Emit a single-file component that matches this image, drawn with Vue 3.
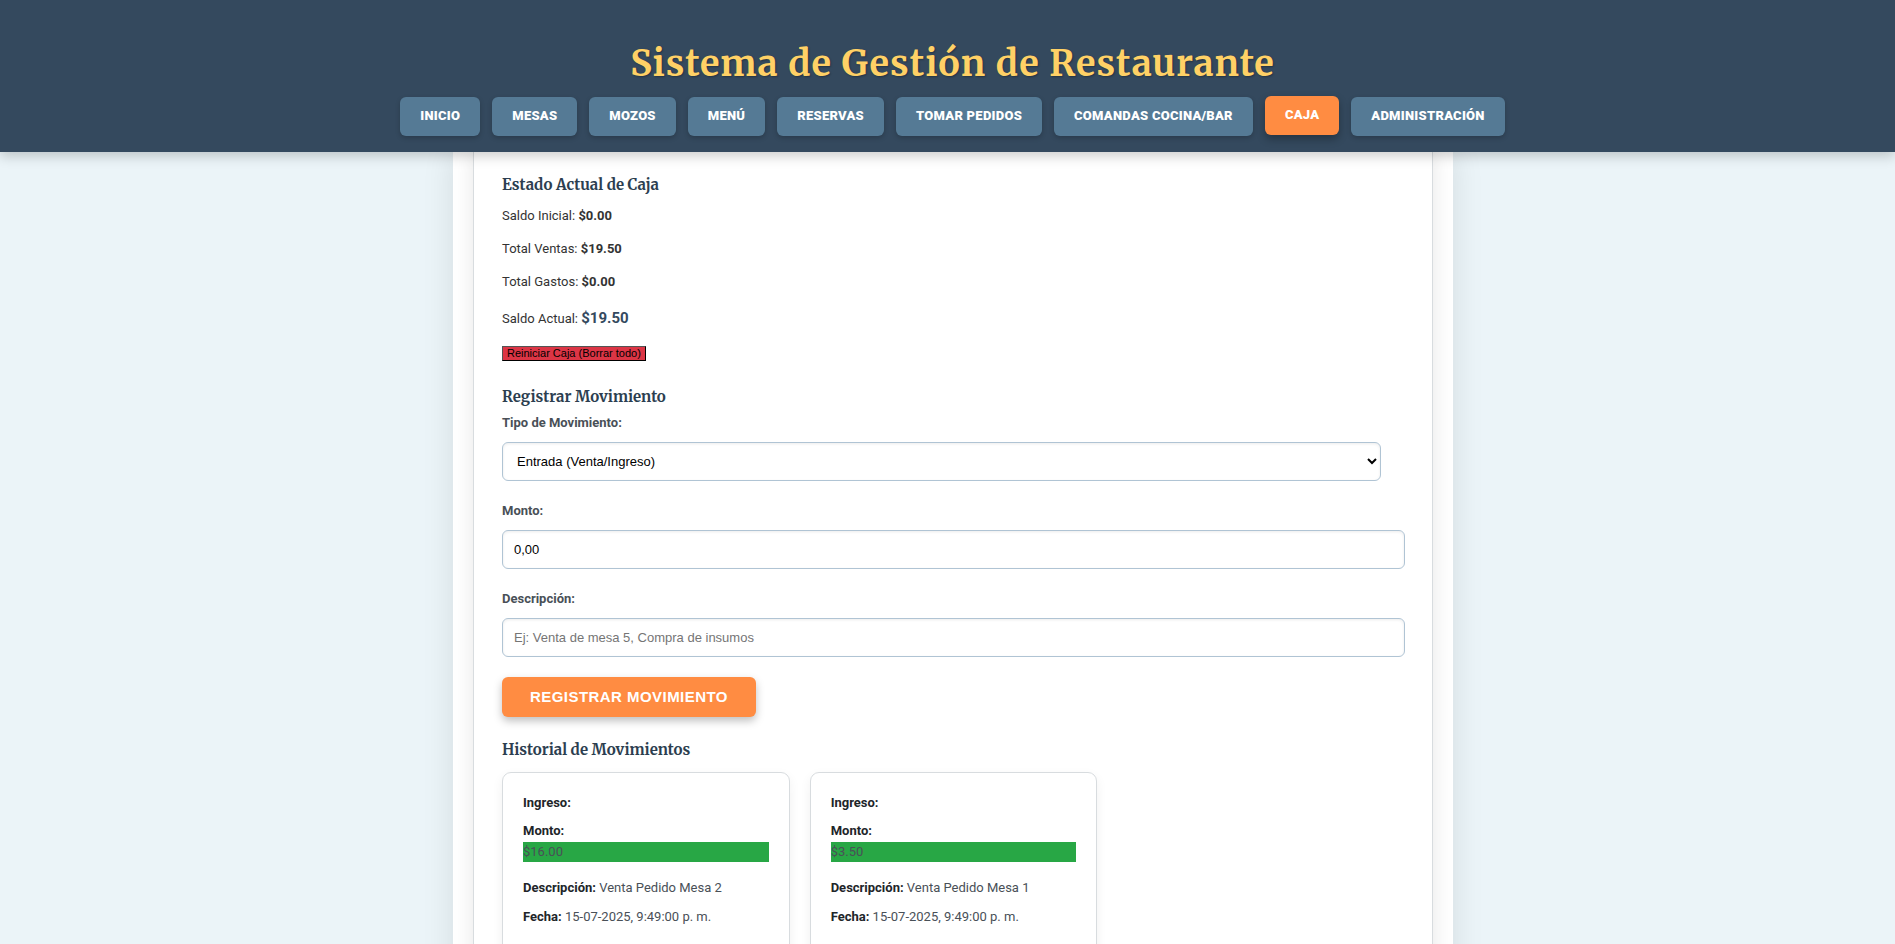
<script setup>
import { ref } from 'vue'

const links = ['Inicio', 'Mesas', 'Mozos', 'Menú', 'Reservas', 'Tomar Pedidos', 'Comandas Cocina/Bar', 'Caja', 'Administración']
const active = ref('Caja')

const totals = [
  { label: 'Saldo Inicial:', value: '$0.00' },
  { label: 'Total Ventas:', value: '$19.50' },
  { label: 'Total Gastos:', value: '$0.00' }
]

const kind = ref('entrada')
const amount = ref('0,00')
const description = ref('')

const movements = [
  { id: 2, amount: '$16.00', text: 'Venta Pedido Mesa 2', date: '15-07-2025, 9:49:00 p. m.' },
  { id: 1, amount: '$3.50', text: 'Venta Pedido Mesa 1', date: '15-07-2025, 9:49:00 p. m.' }
]
</script>

<template>
  <div class="app">
    <header class="top">
      <h1>Sistema de Gestión de Restaurante</h1>
      <nav>
        <a
          v-for="link in links"
          :key="link"
          href="#"
          :class="{ active: link === active }"
          @click.prevent="active = link"
        >{{ link }}</a>
      </nav>
    </header>

    <main class="scroll">
      <div class="container">
        <section class="panel">
          <h3>Estado Actual de Caja</h3>
          <div class="totals">
            <p v-for="t in totals" :key="t.label">{{ t.label }} <strong>{{ t.value }}</strong></p>
            <p class="current">Saldo Actual: <strong>$19.50</strong></p>
          </div>
          <button type="button" class="reset">Reiniciar Caja (Borrar todo)</button>

          <h3>Registrar Movimiento</h3>
          <form @submit.prevent>
            <label for="kind">Tipo de Movimiento:</label>
            <select id="kind" v-model="kind">
              <option value="entrada">Entrada (Venta/Ingreso)</option>
              <option value="salida">Salida (Gasto)</option>
            </select>
            <label for="amount">Monto:</label>
            <input id="amount" v-model="amount" type="text" inputmode="decimal">
            <label for="description">Descripción:</label>
            <input id="description" v-model="description" type="text" placeholder="Ej: Venta de mesa 5, Compra de insumos">
            <button type="submit" class="submit">Registrar Movimiento</button>
          </form>

          <h3>Historial de Movimientos</h3>
          <div class="cards">
            <article v-for="m in movements" :key="m.id" class="card">
              <p><strong>Ingreso:</strong></p>
              <p><strong>Monto:</strong></p>
              <div class="amount">{{ m.amount }}</div>
              <p><strong>Descripción:</strong> {{ m.text }}</p>
              <p><strong>Fecha:</strong> {{ m.date }}</p>
            </article>
          </div>
        </section>
      </div>
    </main>
  </div>
</template>

<style>
body {
  margin: 0;
  background: #ebf4f8;
}
</style>

<style scoped>
.app {
  display: flex;
  flex-direction: column;
  height: 100vh;
  font-family: Roboto, "Liberation Sans", sans-serif;
  font-size: 13px;
  line-height: 20px;
  color: #333;
}

.top {
  position: relative;
  z-index: 1;
  padding: 42px 0 16px 10px;
  background: #34495e;
  box-shadow: 0 4px 12px rgba(0, 0, 0, 0.2);
  text-align: center;
}

h1,
h3 {
  margin: 0;
  font-family: Merriweather, "DejaVu Serif Condensed", "DejaVu Serif", serif;
  font-weight: 700;
}

h1 {
  margin-bottom: 11px;
  font-size: 36px;
  line-height: 44px;
  letter-spacing: 1px;
  color: #ffd166;
  text-shadow: 1px 1px 2px rgba(0, 0, 0, 0.3);
}

nav {
  display: flex;
  flex-wrap: wrap;
  justify-content: center;
  gap: 12px;
}

nav a {
  padding: 9px 20px 10px;
  border-radius: 6px;
  background: #557a95;
  color: #fff;
  font-weight: 900;
  letter-spacing: 0.02em;
  text-decoration: none;
  text-transform: uppercase;
  box-shadow: 0 2px 5px rgba(0, 0, 0, 0.2);
}

nav a.active {
  background: #ff8c42;
  box-shadow: 0 4px 8px rgba(0, 0, 0, 0.3);
  transform: translateY(-1px);
}

.scroll {
  flex: 1;
  min-height: 0;
  padding-left: 11px;
  overflow-y: auto;
  scrollbar-width: none;
}

.container {
  box-sizing: border-box;
  max-width: 1000px;
  margin: 0 auto;
  padding: 0 20px;
  background: #fff;
  box-shadow: 0 0 30px rgba(0, 0, 0, 0.1);
}

.panel {
  padding: 21px 27px 40px 28px;
  border: 1px solid #d8dcdf;
  border-width: 0 1px;
  box-shadow: 0 0 20px rgba(0, 0, 0, 0.1);
}

h3 {
  font-size: 15px;
  line-height: 24px;
  color: #2c3e50;
}

.totals p {
  margin: 0;
  padding: 6px 0 7px;
}

.totals p:first-child,
.totals .current {
  padding-top: 9px;
}

.current strong {
  font-size: 15px;
  color: #34495e;
}

.reset {
  display: block;
  margin: 10px 0 24px;
  padding: 0 4px;
  border: 1px outset #000;
  background: #dc3545;
  color: #000;
  font: 11px/13px "Liberation Sans", Arial, sans-serif;
}

form {
  margin-bottom: 21px;
}

label {
  display: block;
  padding: 4px 0 9px;
  font-weight: 700;
  color: #495057;
}

select,
input {
  display: block;
  box-sizing: border-box;
  width: 100%;
  height: 39px;
  margin: 0 0 16px;
  padding: 0 11px;
  border: 1px solid #b0c4d4;
  border-radius: 6px;
  background: #fff;
  color: #000;
  font: 13px "Liberation Sans", Arial, sans-serif;
  box-shadow: inset 0 1px 3px rgba(0, 0, 0, 0.08);
}

select {
  width: calc(100% - 24px);
  padding: 0 0 0 10px;
}

.submit {
  display: block;
  height: 40px;
  margin-top: 20px;
  padding: 0 28px 2px;
  border: 0;
  border-radius: 6px;
  background: #ff8c42;
  color: #fff;
  font: 700 15px "Liberation Sans", Arial, sans-serif;
  letter-spacing: 0.03em;
  text-transform: uppercase;
  box-shadow: 0 4px 8px rgba(0, 0, 0, 0.25);
}

.cards {
  display: grid;
  grid-template-columns: repeat(auto-fill, minmax(260px, 1fr));
  gap: 20px;
  margin-top: 10px;
}

.card {
  padding: 20px 20px 60px;
  border: 1px solid #d8dcdf;
  border-radius: 9px;
  background: #fff;
  color: #495057;
  box-shadow: 0 4px 12px rgba(0, 0, 0, 0.06);
}

.card p {
  margin: 0 0 9px;
}

.card p:first-child {
  margin-bottom: 8px;
}

.card p:nth-of-type(2) {
  margin-bottom: 1px;
}

.card strong {
  color: #212529;
}

.amount {
  margin-bottom: 16px;
  background: #28a745;
}
</style>
